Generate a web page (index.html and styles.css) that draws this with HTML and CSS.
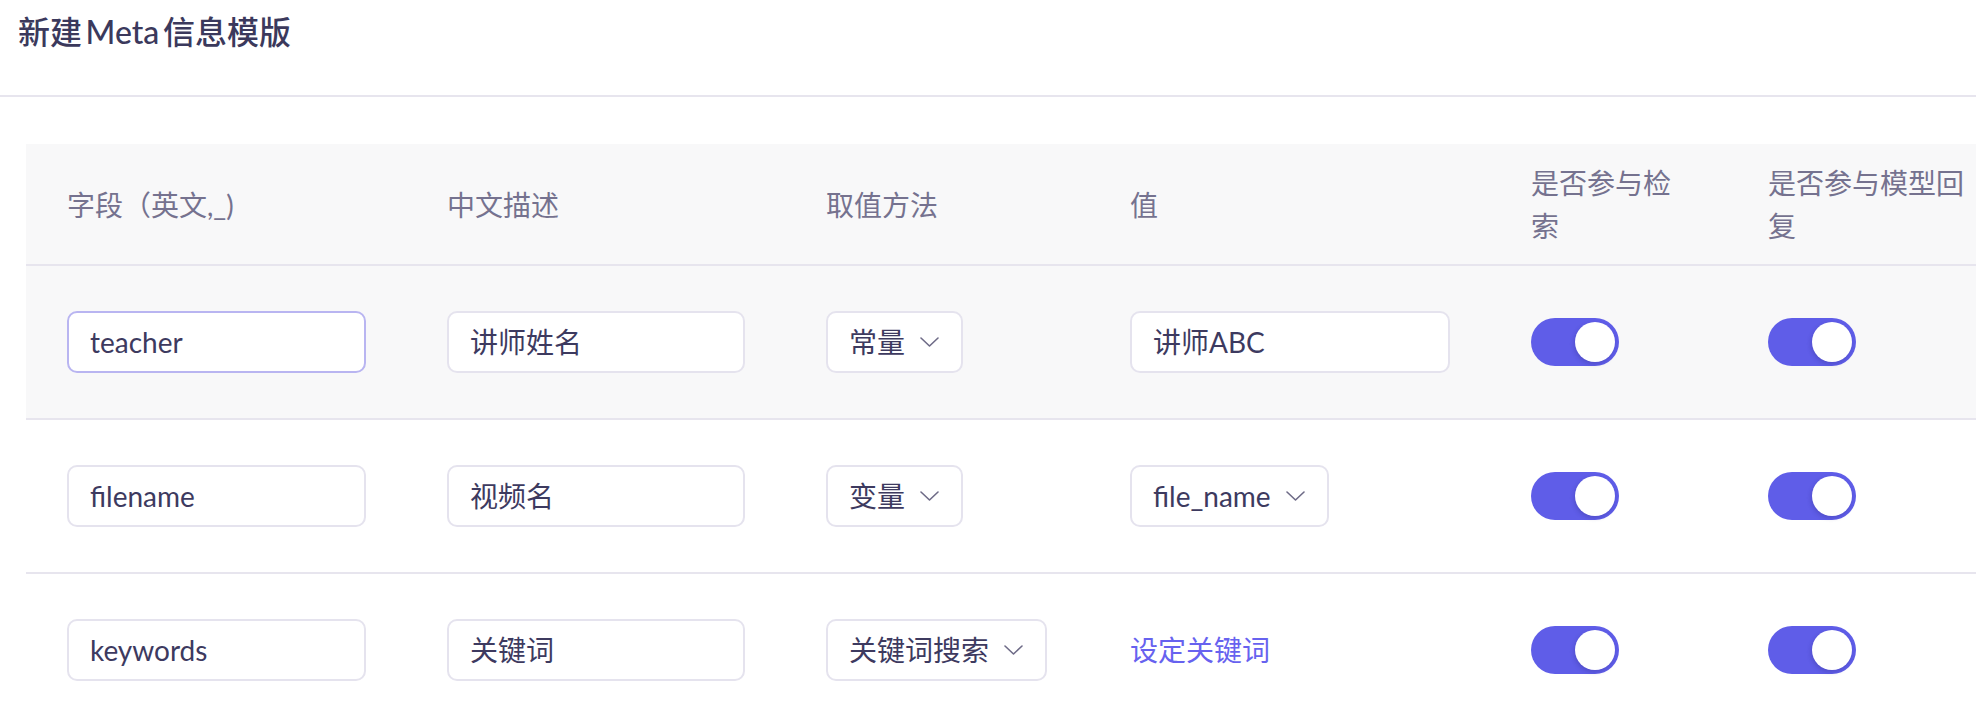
FILE: index.html
```html
<!DOCTYPE html>
<html lang="zh-CN">
<head>
<meta charset="utf-8">
<title>新建Meta信息模版</title>
<link rel="stylesheet" href="styles.css">
</head>
<body>
<header class="page-header">
  <h1 class="page-title">新建 Meta 信息模版</h1>
</header>
<main class="content">
  <table class="meta-table">
    <colgroup>
      <col class="c-field"><col class="c-desc"><col class="c-method"><col class="c-value"><col class="c-search"><col class="c-reply">
    </colgroup>
    <thead>
      <tr>
        <th>字段（英文,_)</th>
        <th>中文描述</th>
        <th>取值方法</th>
        <th>值</th>
        <th>是否参与检索</th>
        <th>是否参与模型回复</th>
      </tr>
    </thead>
    <tbody>
      <tr class="row-hover">
        <td><div class="input input-focus">teacher</div></td>
        <td><div class="input">讲师姓名</div></td>
        <td><div class="select"><span>常量</span><svg class="chev" viewBox="0 0 19 10" width="19" height="10"><path d="M1 1 L9.5 9 L18 1" fill="none" stroke="#6e6b87" stroke-width="1.6" stroke-linecap="round" stroke-linejoin="round"/></svg></div></td>
        <td><div class="input">讲师ABC</div></td>
        <td><span class="switch"><span class="knob"></span></span></td>
        <td><span class="switch"><span class="knob"></span></span></td>
      </tr>
      <tr>
        <td><div class="input">filename</div></td>
        <td><div class="input">视频名</div></td>
        <td><div class="select"><span>变量</span><svg class="chev" viewBox="0 0 19 10" width="19" height="10"><path d="M1 1 L9.5 9 L18 1" fill="none" stroke="#6e6b87" stroke-width="1.6" stroke-linecap="round" stroke-linejoin="round"/></svg></div></td>
        <td><div class="select"><span>file_name</span><svg class="chev" viewBox="0 0 19 10" width="19" height="10"><path d="M1 1 L9.5 9 L18 1" fill="none" stroke="#6e6b87" stroke-width="1.6" stroke-linecap="round" stroke-linejoin="round"/></svg></div></td>
        <td><span class="switch"><span class="knob"></span></span></td>
        <td><span class="switch"><span class="knob"></span></span></td>
      </tr>
      <tr>
        <td><div class="input">keywords</div></td>
        <td><div class="input">关键词</div></td>
        <td><div class="select"><span>关键词搜索</span><svg class="chev" viewBox="0 0 19 10" width="19" height="10"><path d="M1 1 L9.5 9 L18 1" fill="none" stroke="#6e6b87" stroke-width="1.6" stroke-linecap="round" stroke-linejoin="round"/></svg></div></td>
        <td><a class="link" href="#">设定关键词</a></td>
        <td><span class="switch"><span class="knob"></span></span></td>
        <td><span class="switch"><span class="knob"></span></span></td>
      </tr>
    </tbody>
  </table>
</main>
</body>
</html>
```

FILE: styles.css
```css
html, body {
  margin: 0;
  padding: 0;
  overflow: hidden;
  background: #ffffff;
}

body {
  font-family: Lato, "Noto Sans CJK SC", sans-serif;
  color: #3d3a5f;
  width: 1976px;
  height: 718px;
}

.page-header {
  height: 97px;
  box-sizing: border-box;
  padding: 12px 0 0 18px;
  border-bottom: 2px solid #e7e5ee;
}

.page-title {
  margin: 0;
  font-size: 32px;
  line-height: 40px;
  font-weight: 500;
  color: #3b395c;
  word-spacing: -4.5px;
}

.content {
  padding: 47px 0 0 26px;
}

.meta-table {
  border-collapse: collapse;
  table-layout: fixed;
  width: 1991px;
  font-size: 28px;
}

.c-field { width: 380px; }
.c-desc { width: 379px; }
.c-method { width: 304px; }
.c-value { width: 401px; }
.c-search { width: 237px; }
.c-reply { width: 290px; }

.meta-table th {
  background: #f8f8f9;
  color: #75728f;
  font-weight: 400;
  text-align: left;
  vertical-align: middle;
  line-height: 43px;
  padding: 18px 40px 16px 41px;
  border-bottom: 2px solid #e7e5ee;
}

.meta-table td {
  padding: 45px 40px 45px 41px;
  vertical-align: middle;
  border-bottom: 2px solid #e7e5ee;
  background: #ffffff;
}

.meta-table tr.row-hover td {
  background: #f8f8f9;
}

.input {
  box-sizing: border-box;
  width: 100%;
  height: 62px;
  border: 2px solid #e5e3ee;
  border-radius: 10px;
  background: #ffffff;
  padding: 0 21px;
  display: flex;
  align-items: center;
  line-height: 1;
  color: #3d3a5f;
  white-space: nowrap;
}

.input-focus {
  border-color: #b9b5f1;
}

.select {
  box-sizing: border-box;
  display: inline-flex;
  align-items: center;
  gap: 15px;
  height: 62px;
  border: 2px solid #e5e3ee;
  border-radius: 10px;
  background: #ffffff;
  padding: 0 22px 0 21px;
  color: #3d3a5f;
  white-space: nowrap;
  line-height: 1;
}

.chev {
  display: block;
  flex: none;
}

.link {
  color: #6762ef;
  text-decoration: none;
  line-height: 62px;
}

.switch {
  position: relative;
  display: block;
  width: 88px;
  height: 48px;
  border-radius: 24px;
  background: #5f5de8;
}

.knob {
  position: absolute;
  top: 4px;
  right: 4px;
  width: 40px;
  height: 40px;
  border-radius: 50%;
  background: #ffffff;
  box-shadow: -1px 2px 4px rgba(40, 35, 110, 0.25);
}
```
